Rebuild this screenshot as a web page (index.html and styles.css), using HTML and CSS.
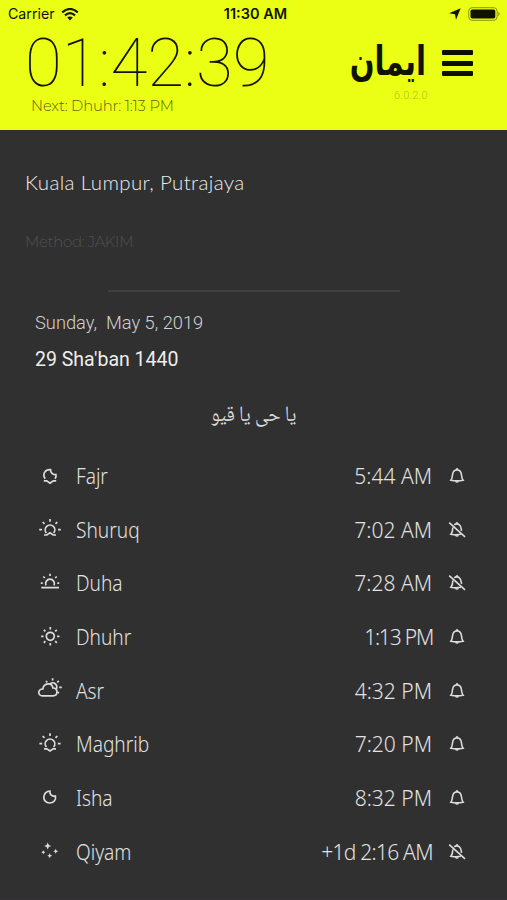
FILE: index.html
```html
<!DOCTYPE html>
<html lang="en">
<head>
<meta charset="utf-8">
<title>Prayer times</title>
<link rel="stylesheet" href="styles.css">
</head>
<body>
<svg class="defs" width="0" height="0">
  <symbol id="bell" viewBox="-10 -10 20 20"><path d="M-6.1 4.2C-4.8 2.5-4.6.8-4.4-1.5C-4.1-4.5-2.5-6 0-6S4.1-4.5 4.4-1.5C4.6.8 4.8 2.5 6.1 4.2Q0 5.6-6.1 4.2ZM-1-6.2L0-7.2L1-6.2M-1.5 5.2Q0 6.8 1.5 5.2"/></symbol>
  <symbol id="bell-off" viewBox="-10 -10 20 20"><path d="M-7.8-7.3L8 6.8M-2.8-5.3Q0-7 2.4-5.2C4.3-3.8 4.2-1.5 4.5.8M-4.2-2.6C-4.2.2-4.6 2.4-6.1 4.2Q-1 5.3 3.8 4.3M-1-6.2L0-7.2L1-6.2M-1.5 5.2Q0 6.8 1.5 5.2"/></symbol>
</svg>
<header class="header">
  <div class="status">
    <div class="carrier"><span>Carrier</span>
      <svg width="18" height="13" viewBox="0 0 18 13" fill="none" stroke="#141700" stroke-width="2.1"><path d="M1.2 4.4Q9-2.5 16.8 4.4M4 7.4Q9 3 14 7.4"/><path d="M6.2 9.6Q9 7.3 11.8 9.6L9 12.4Z" fill="#141700" stroke="none"/></svg>
    </div>
    <div class="clock">11:30 AM</div>
    <div class="power">
      <svg width="12" height="12" viewBox="0 0 12 12"><path d="M11.7.3L7 11.7L6 6.2L.1 5.2Z" fill="#101300"/></svg>
      <svg width="33" height="14" viewBox="0 0 33 14"><rect x=".7" y=".7" width="28.4" height="12.6" rx="3.4" fill="none" stroke="#8a960a"/><rect x="2.5" y="2.5" width="24.8" height="9" rx="1.8" fill="#101300"/><path d="M30.3 4.8Q33 7 30.3 9.2Z" fill="#8a960a"/></svg>
    </div>
  </div>
  <div class="hero">
    <div class="countdown">
      <div class="timer">01:42:39</div>
      <div class="next">Next: Dhuhr: 1:13 PM</div>
    </div>
    <div class="brand">
      <div class="logo" lang="ar" dir="rtl">ايمان</div>
      <div class="version">6.0.2.0</div>
    </div>
    <div class="menu"><i></i><i></i><i></i></div>
  </div>
</header>
<main>
  <div class="place">Kuala Lumpur, Putrajaya</div>
  <div class="method">Method: JAKIM</div>
  <div class="rule"></div>
  <div class="date">Sunday,&nbsp; May 5, 2019</div>
  <div class="hijri">29 Sha'ban 1440</div>
  <div class="dhikr" lang="ar" dir="rtl">يا حى يا قيو</div>
  <div class="times">
    <div class="row"><svg class="sky" viewBox="-14 -14 28 28"><path d="M-4.8 2.8C-8-1.8-5-6.7.6-6.3C.3-3.2 2.8-.9 5.9-1.5Q6.6.8 5 2.8M-6.2 4.9H-3.3L0 7.2L3.3 4.9H6.2"/></svg><span class="name">Fajr</span><span class="time">5:44 AM</span><svg class="bell"><use href="#bell"/></svg></div>
    <div class="row"><svg class="sky" viewBox="-14 -14 28 28"><path d="M-3.6 3A4.8 4.8 0 1 1 3.6 3M-6 5H-3.2L0 2.8L3.2 5H6M0-11V-8.2M-10.8-.4H-8M8-.4H10.8M-7.3-8L-5.5-6.2M7.3-8L5.5-6.2"/></svg><span class="name">Shuruq</span><span class="time">7:02 AM</span><svg class="bell"><use href="#bell-off"/></svg></div>
    <div class="row"><svg class="sky" viewBox="-14 -14 28 28"><path d="M-4 2.4A4.4 4.4 0 1 1 4 2.4M-8.7 4.6H9M0-9.3V-7M-9.2.2H-7.3M7.3.2H9.2M-6.7-6.5L-5.2-5M6.7-6.5L5.2-5"/></svg><span class="name">Duha</span><span class="time">7:28 AM</span><svg class="bell"><use href="#bell-off"/></svg></div>
    <div class="row"><svg class="sky" viewBox="-14 -14 28 28"><g transform="translate(.3 -.7)"><circle r="4"/><path d="M0-9.2V-6.8M0 6.8V9.2M-9.2 0H-6.8M6.8 0H9.2M-6.5-6.5L-4.9-4.9M6.5-6.5L4.9-4.9M-6.5 6.5L-4.9 4.9M6.5 6.5L4.9 4.9"/></g></svg><span class="name">Dhuhr</span><span class="time tight">1:13 PM</span><svg class="bell"><use href="#bell"/></svg></div>
    <div class="row"><svg class="sky" viewBox="-14 -14 28 28"><path d="M-7.5 4.9C-12.5 4.9-12.5-2.2-7.2-2C-6.2-8.2 1.8-9 3-3C8.3-3.3 8.3 4.9 3 4.9ZM-.7-6.5A4 4 0 1 1 6-1.4M2.6-12.8V-10.5M9.3-3.7H11.8M7.2-8.5L8.8-10.1M-4-10L-2.7-8.7M7.8 1L8.9 2.1"/></svg><span class="name">Asr</span><span class="time">4:32 PM</span><svg class="bell"><use href="#bell"/></svg></div>
    <div class="row"><svg class="sky" viewBox="-14 -14 28 28"><path d="M-3.6 3A4.8 4.8 0 1 1 3.6 3M-6 4.8H-3.2L0 7L3.2 4.8H6M0-10.8V-8M-10.6-.4H-7.8M7.8-.4H10.6M-7.3-8L-5.5-6.2M7.3-8L5.5-6.2"/></svg><span class="name">Maghrib</span><span class="time">7:20 PM</span><svg class="bell"><use href="#bell"/></svg></div>
    <div class="row"><svg class="sky" viewBox="-14 -14 28 28"><path d="M-.1-6.8C-.5-3.5 2-1.3 5.4-2C6.3 1.8 3.6 5-.4 5C-4.2 5-6.2 2-6.2-.8C-6.2-4.2-3.5-6.8-.1-6.8Z"/></svg><span class="name">Isha</span><span class="time">8:32 PM</span><svg class="bell"><use href="#bell"/></svg></div>
    <div class="row"><svg class="sky stars" viewBox="-14 -14 28 28"><path d="M-2.3-9.5L-1.2-7.1L1.2-6L-1.2-4.9L-2.3-2.5L-3.4-4.9L-5.8-6L-3.4-7.1ZM5.7-3.2L6.5-1.5L8.2-.7L6.5.1L5.7 1.8L4.9.1L3.2-.7L4.9-1.5ZM-.3 1.2L.5 2.9L2.2 3.7L.5 4.5L-.3 6.2L-1.1 4.5L-2.8 3.7L-1.1 2.9ZM-6.7-1.7L-6-.4L-4.7.3L-6 1L-6.7 2.3L-7.4 1L-8.7.3L-7.4-.4Z"/></svg><span class="name">Qiyam</span><span class="time tight-long">+1d 2:16 AM</span><svg class="bell"><use href="#bell-off"/></svg></div>
  </div>
</main>
</body>
</html>
```
FILE: styles.css
```css
* { box-sizing: border-box; }
body { margin: 0; width: 507px; height: 900px; overflow: hidden; background: #303030; border-bottom: 1px solid #382f36; color: #d8d8d8; font-family: Roboto, sans-serif; }
.defs { display: block; }
.header { height: 130px; background: #eaff14; color: #101300; }
.status { display: grid; grid-template-columns: 1fr auto 1fr; align-items: center; height: 28px; padding: 0 6px 0 8px; font: 500 14px/28px Inter, sans-serif; }
.carrier { display: flex; align-items: center; gap: 6px; font-weight: 400; font-size: 14.2px; }
.clock { font-weight: 600; font-size: 14.5px; padding-left: 2px; }
.power { display: flex; align-items: center; justify-content: flex-end; gap: 7px; }
.hero { display: flex; height: 102px; padding-left: 25px; }
.countdown { width: 325px; }
.timer { height: 68px; font: 100 67.2px/70px Roboto, sans-serif; white-space: nowrap; }
.next { padding-left: 6px; font: 300 14.8px/21px Montserrat, Lato, sans-serif; color: #5c650a; letter-spacing: -.15px; }
.brand { width: 92px; display: flex; flex-direction: column; align-items: flex-start; }
.logo { height: 60px; width: 76px; font: 700 36px/66px "DejaVu Sans", sans-serif; white-space: nowrap; transform: scale(.81, 1.12); transform-origin: 100% 50%; }
.version { align-self: flex-end; width: 48px; font: 300 11px/16px Roboto, sans-serif; color: #b4c40c; letter-spacing: .2px; }
.menu { display: flex; flex-direction: column; gap: 5.6px; padding-top: 22px; }
.menu i { width: 31px; height: 5px; border-radius: 1px; background: #0c0e00; }
.place { margin: 37px 0 0 25px; height: 31px; font: 300 20.5px/30px Lato, sans-serif; letter-spacing: .35px; color: #ececec; }
.method { margin: 34px 0 0 25px; height: 20px; font: 300 15px/20px Montserrat, Lato, sans-serif; color: #505050; letter-spacing: -.35px; }
.rule { width: 292px; height: 2px; margin: 38px 0 0 108px; background: #404040; }
.date { margin: 18px 0 0 35px; height: 26px; font: 300 18.3px/26px Roboto, sans-serif; color: #d2d2d2; }
.hijri { margin: 11px 0 0 35px; height: 26px; font: 400 19.5px/25px Roboto, sans-serif; color: #eee; }
.dhikr { margin-top: 25px; height: 38px; text-align: center; font: 400 22px/36px "Noto Naskh Arabic", Amiri, "DejaVu Sans", sans-serif; transform: scaleX(.88); }
.times { margin-top: 13.2px; }
.row { display: flex; align-items: center; height: 53.7px; padding: 0 40px 0 36px; font: 300 21px/30px "Noto Sans", sans-serif; color: #e2e2e2; }
.sky { width: 28px; height: 28px; margin-right: 12px; fill: none; stroke: #dcdcdc; stroke-width: 1.7; }
.stars { fill: #dcdcdc; stroke: none; }
.name { flex: 1; transform: scaleX(.91); transform-origin: 0 50%; }
.time { margin-right: 15px; }
.tight { letter-spacing: -1.2px; margin-right: 14px; }
.tight-long { letter-spacing: -.75px; margin-right: 14.3px; }
.bell { width: 20px; height: 20px; fill: none; stroke: #dcdcdc; stroke-width: 1.6; }
```
